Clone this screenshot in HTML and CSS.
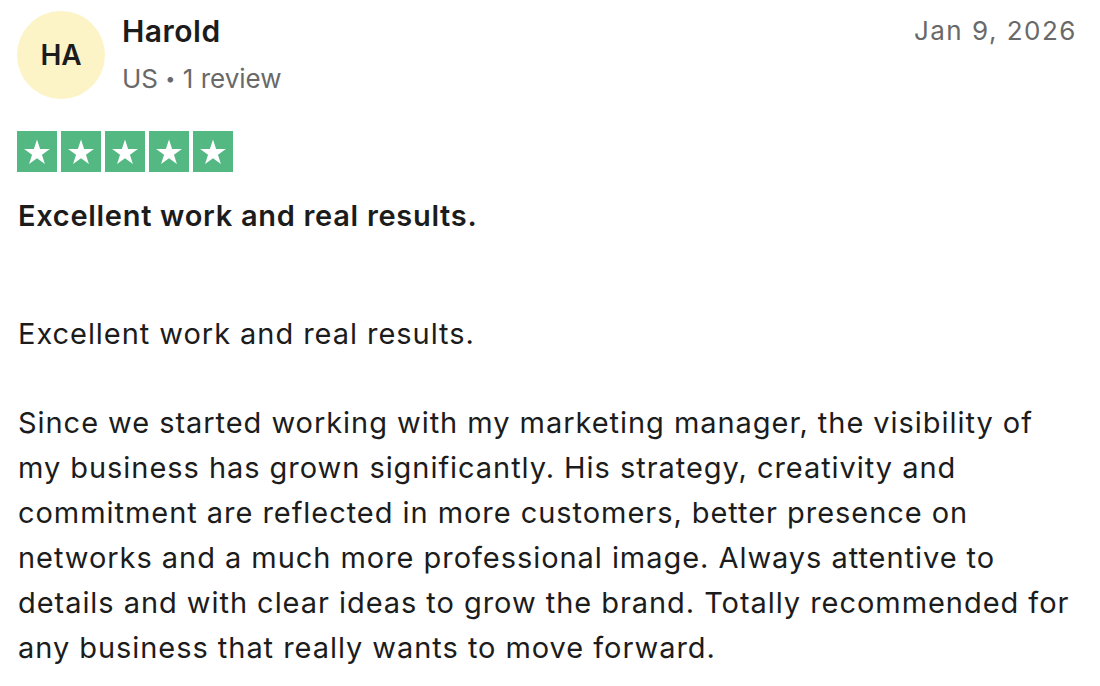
FILE: index.html
```html
<!DOCTYPE html>
<html lang="en">
<head>
<meta charset="utf-8">
<link rel="stylesheet" href="styles.css">
</head>
<body>
<article class="review">
  <header class="review-header">
    <div class="avatar">HA</div>
    <div class="consumer">
      <div class="name">Harold</div>
      <div class="meta">US <span class="dot">•</span> 1 review</div>
    </div>
    <time class="date">Jan 9, 2026</time>
  </header>
  <div class="stars" aria-label="Rated 5 out of 5">
    <span class="star"><svg viewBox="0 0 24 24"><path d="M12 3.2l2.2 6.6h6.9l-5.6 4.1 2.1 6.6L12 16.4l-5.6 4.1 2.1-6.6-5.6-4.1h6.9z"/></svg></span>
    <span class="star"><svg viewBox="0 0 24 24"><path d="M12 3.2l2.2 6.6h6.9l-5.6 4.1 2.1 6.6L12 16.4l-5.6 4.1 2.1-6.6-5.6-4.1h6.9z"/></svg></span>
    <span class="star"><svg viewBox="0 0 24 24"><path d="M12 3.2l2.2 6.6h6.9l-5.6 4.1 2.1 6.6L12 16.4l-5.6 4.1 2.1-6.6-5.6-4.1h6.9z"/></svg></span>
    <span class="star"><svg viewBox="0 0 24 24"><path d="M12 3.2l2.2 6.6h6.9l-5.6 4.1 2.1 6.6L12 16.4l-5.6 4.1 2.1-6.6-5.6-4.1h6.9z"/></svg></span>
    <span class="star"><svg viewBox="0 0 24 24"><path d="M12 3.2l2.2 6.6h6.9l-5.6 4.1 2.1 6.6L12 16.4l-5.6 4.1 2.1-6.6-5.6-4.1h6.9z"/></svg></span>
  </div>
  <h2 class="title">Excellent work and real results.</h2>
  <p class="body">Excellent work and real results.</p>
  <p class="body">Since we started working with my marketing manager, the visibility of my business has grown significantly. His strategy, creativity and commitment are reflected in more customers, better presence on networks and a much more professional image. Always attentive to details and with clear ideas to grow the brand. Totally recommended for any business that really wants to move forward.</p>
</article>
</body>
</html>
```

FILE: styles.css
```css
html, body {
  margin: 0;
  padding: 0;
  background: #ffffff;
}

body {
  font-family: Inter, "Liberation Sans", sans-serif;
  color: #1c1c1c;
}

.review {
  padding: 11px 22px 0 18px;
}

.review-header {
  display: flex;
  align-items: flex-start;
}

.avatar {
  width: 88px;
  height: 88px;
  margin-left: -1px;
  border-radius: 50%;
  background: #fcf4c7;
  color: #1c1c1c;
  font-size: 28px;
  font-weight: 600;
  display: flex;
  align-items: center;
  justify-content: center;
  flex-shrink: 0;
}

.consumer {
  margin-left: 17px;
  display: flex;
  flex-direction: column;
}

.name {
  font-size: 30px;
  font-weight: 600;
  line-height: 42px;
  letter-spacing: 0.5px;
  margin-top: -1px;
}

.meta {
  font-size: 26px;
  line-height: 40px;
  color: #696969;
  margin-top: 7px;
}

.dot {
  font-size: 18px;
  vertical-align: 3px;
}

.date {
  margin-left: auto;
  margin-right: 1px;
  font-size: 26px;
  line-height: 40px;
  color: #696969;
  letter-spacing: 1.5px;
}

.stars {
  display: flex;
  gap: 4px;
  margin-top: 32px;
  margin-left: -1px;
}

.star {
  width: 40px;
  height: 41px;
  background: #54b883;
  display: flex;
  align-items: center;
  justify-content: center;
}

.star svg {
  width: 34px;
  height: 34px;
  fill: #ffffff;
}

.title {
  margin: 21px 0 0;
  font-size: 29px;
  font-weight: 600;
  line-height: 45px;
  letter-spacing: 0.7px;
}

.body {
  margin: 73px 0 0;
  font-size: 29px;
  line-height: 45px;
  letter-spacing: 0.95px;
}

.body + .body {
  margin-top: 44px;
}
```
